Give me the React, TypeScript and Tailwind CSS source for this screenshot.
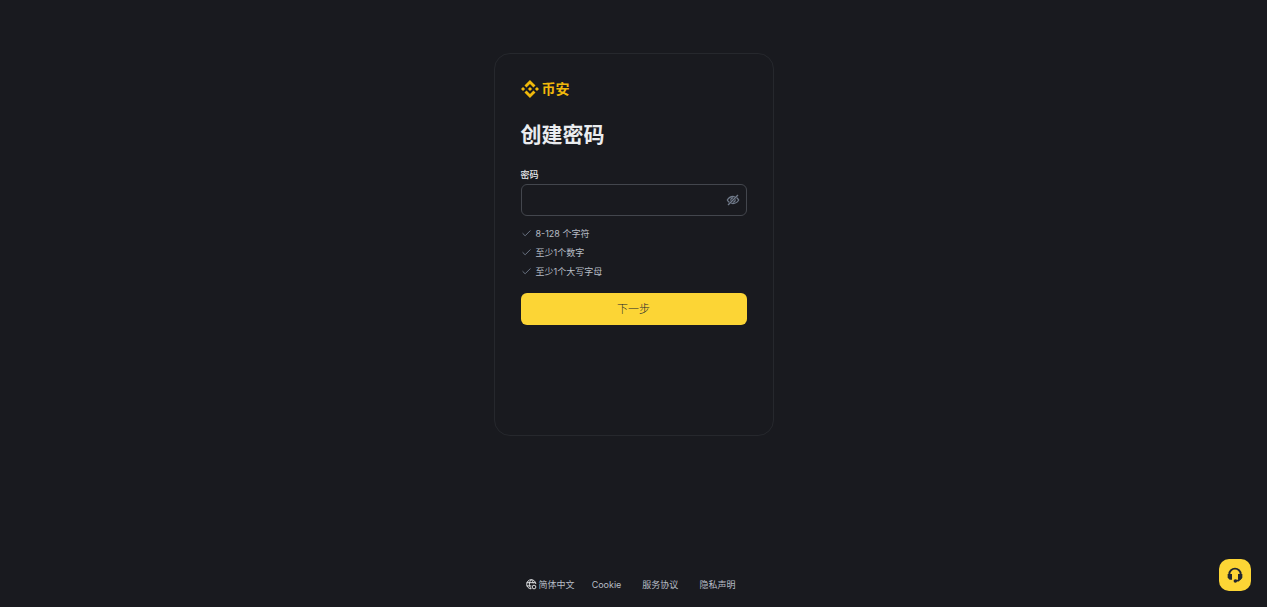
import React from "react";
import { Check } from "lucide-react";

const rules = ["8-128 个字符", "至少1个数字", "至少1个大写字母"];

const links = ["Cookie", "服务协议", "隐私声明"];

const Logo: React.FC = () => (
  <a href="#" className="flex items-center gap-[3px] text-[#f0b90b]">
    <svg viewBox="0 0 24 24" className="size-[18px]" fill="currentColor" aria-hidden="true">
      <path d="M16.624 13.9202l2.7175 2.7154-7.353 7.353-7.353-7.352 2.7175-2.7164 4.6355 4.6595 4.6356-4.6595zm4.6366-4.6366L24 12l-2.7154 2.7164L18.5682 12l2.6924-2.7164zm-9.272.001l2.7163 2.6914-2.7164 2.7174v-.001L9.2721 12l2.7164-2.7154zm-9.2722-.001L5.4088 12l-2.6914 2.6924L0 12l2.7164-2.7164zM11.9885.0115l7.353 7.329-2.7174 2.7154-4.6356-4.6356-4.6355 4.6595-2.7174-2.7154 7.353-7.353z" />
    </svg>
    <span className="text-[14px] leading-[18px] font-bold">币安</span>
  </a>
);

const EyeOffIcon: React.FC = () => (
  <svg viewBox="0 0 24 24" className="size-[14px]" fill="none" stroke="currentColor" strokeWidth="2.2" aria-hidden="true">
    <path d="M15 6.500C14 6.200 13 6 12 6C8 6 4.500 8.200 2.300 12C3.200 13.700 4.400 15.100 5.800 16.100" />
    <path d="M9 17.500C10 17.800 11 18 12 18C16 18 19.500 15.800 21.700 12C20.800 10.300 19.600 8.900 18.200 7.900" />
    <path d="M8.300 13A4 4 0 0 1 12 8.200M15.700 11A4 4 0 0 1 12 15.800" />
    <path d="M3.500 20.500l17-17" />
  </svg>
);

const GlobeIcon: React.FC = () => (
  <svg viewBox="0 0 24 24" className="size-[11px] text-[#eaecef]" fill="none" stroke="currentColor" strokeWidth="2" aria-hidden="true">
    <path d="M21.500 11A10 10 0 1 0 11 21.500" />
    <path d="M1.500 8h19M1.500 15h10M11.500 1.500c-5.500 5-5.500 14.500 0 20M11.500 1.500c2.500 2.300 3.800 5 4.200 8" />
    <circle cx="17.500" cy="17.500" r="4" />
  </svg>
);

const HeadsetIcon: React.FC = () => (
  <svg viewBox="0 0 24 24" className="size-4" fill="none" stroke="currentColor" strokeWidth="2.8" aria-hidden="true">
    <path d="M3.500 12v-1.500a8.500 8 0 0 1 17 0V12" />
    <path d="M20.500 15v2l-3.500 3.500h-4" />
    <path d="M1 10.500h6.500v8.500H4L1 16zM23 10.500h-6.500v8.500H20l3-3z" fill="currentColor" stroke="none" />
    <circle cx="12.500" cy="21" r="2.600" fill="currentColor" stroke="none" />
  </svg>
);

const PasswordForm: React.FC = () => (
  <form className="mt-6 flex flex-col" onSubmit={(e) => e.preventDefault()}>
    <h1 className="text-[21px] leading-[26px] font-bold">创建密码</h1>
    <label htmlFor="password" className="mt-[19px] text-[9px] leading-[15px] font-medium">
      密码
    </label>
    <div className="mt-[2px] flex h-8 items-center rounded-md border border-[#43464d] pr-[6px] pl-2">
      <input
        id="password"
        type="password"
        className="min-w-0 flex-1 bg-transparent text-[11px] outline-none"
      />
      <button type="button" aria-label="显示密码" className="text-[#707a8a]">
        <EyeOffIcon />
      </button>
    </div>
    <ul className="mt-[10px] flex flex-col gap-1 text-[#b7bdc6]">
      {rules.map((rule) => (
        <li key={rule} className="flex items-center gap-1 text-[9px] leading-[15px]">
          <Check className="size-[11px] text-[#707a8a]" strokeWidth={2} />
          {rule}
        </li>
      ))}
    </ul>
    <button type="submit" className="mt-[14px] h-8 rounded-md bg-[#fcd535] text-[11px] font-light text-[#202630]">
      下一步
    </button>
  </form>
);

const App: React.FC = () => {
  return (
    <div className="flex min-h-screen flex-col items-center bg-[#191a1f] pt-[53px] font-[Inter,'Noto_Sans_CJK_SC',sans-serif] text-[#eaecef]">
      <main className="min-h-[383px] w-full max-w-[280px] rounded-2xl border border-[#26282d] p-[26px]">
        <Logo />
        <PasswordForm />
      </main>
      <footer className="mt-auto mr-[6px] flex items-center gap-[21px] pt-6 pb-[15px] text-[9px] leading-[15px] text-[#b7bdc6]">
        <button type="button" className="-mr-1 flex items-center gap-[2px]">
          <GlobeIcon />
          简体中文
        </button>
        {links.map((link) => (
          <a key={link} href="#">
            {link}
          </a>
        ))}
      </footer>
      <button
        type="button"
        aria-label="在线客服"
        className="fixed right-4 bottom-4 flex size-8 items-center justify-center rounded-[10px] bg-[#fcd535] text-[#202630]"
      >
        <HeadsetIcon />
      </button>
    </div>
  );
};

export default App;
